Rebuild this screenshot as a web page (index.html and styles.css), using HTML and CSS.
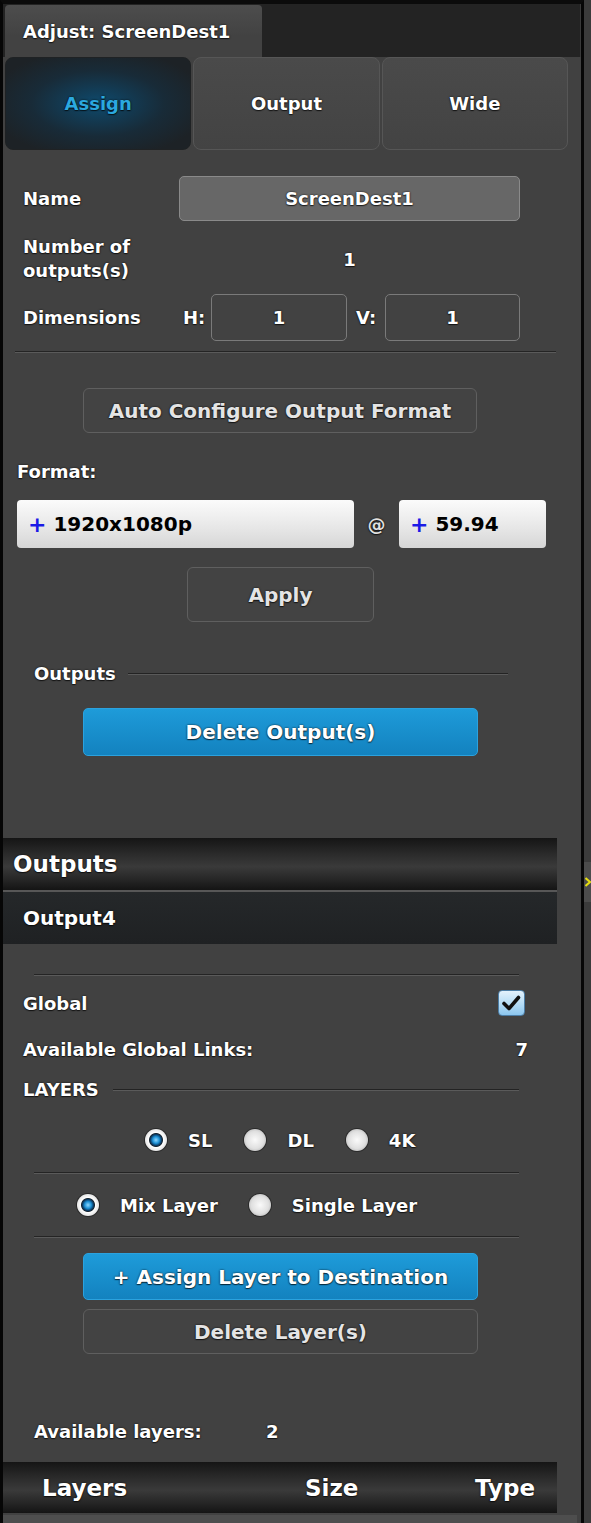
FILE: index.html
```html
<!DOCTYPE html>
<html lang="en">
<head>
<meta charset="utf-8">
<title>Adjust: ScreenDest1</title>
<link rel="stylesheet" href="styles.css">
</head>
<body>
<div class="panel">
  <div class="head">
    <div class="head-tab">Adjust: ScreenDest1</div>
  </div>

  <div class="tabs">
    <div class="tab active">Assign</div>
    <div class="tab">Output</div>
    <div class="tab">Wide</div>
  </div>

  <div class="content">
    <div class="form-row name-row">
      <span class="label">Name</span>
      <div class="name-field">ScreenDest1</div>
    </div>

    <div class="form-row count-row">
      <span class="label">Number of<br>outputs(s)</span>
      <span class="value">1</span>
    </div>

    <div class="form-row dims-row">
      <span class="label">Dimensions</span>
      <span class="axis">H:</span>
      <div class="dim-field">1</div>
      <span class="axis axis-v">V:</span>
      <div class="dim-field dim-v">1</div>
    </div>

    <div class="rule rule-wide"></div>

    <div class="btn btn-outline btn-auto">Auto Configure Output Format</div>

    <div class="format-label">Format:</div>

    <div class="format-row">
      <div class="select select-res"><span class="plus">+</span>1920x1080p</div>
      <span class="at">@</span>
      <div class="select select-rate"><span class="plus">+</span>59.94</div>
    </div>

    <div class="btn btn-outline btn-apply">Apply</div>

    <div class="section-title outputs-title">
      <span>Outputs</span>
      <div class="section-line"></div>
    </div>

    <div class="btn btn-blue btn-delete-out">Delete Output(s)</div>

    <div class="bar bar-outputs">Outputs</div>
    <div class="bar-sep"></div>
    <div class="bar-sub">Output4</div>

    <div class="rule rule-narrow rule-top"></div>

    <div class="line-row global-row">
      <span>Global</span>
      <span class="check">
        <svg viewBox="0 0 26 26" width="26" height="26"><path d="M6 13.5 L11 18.5 L20.5 7.5" fill="none" stroke="#111" stroke-width="3.6" stroke-linecap="round" stroke-linejoin="round"/></svg>
      </span>
    </div>

    <div class="line-row links-row">
      <span>Available Global Links:</span>
      <span>7</span>
    </div>

    <div class="section-title layers-title">
      <span>LAYERS</span>
      <div class="section-line"></div>
    </div>

    <div class="radio-row res-row">
      <span class="option"><span class="radio on"></span>SL</span>
      <span class="option"><span class="radio"></span>DL</span>
      <span class="option"><span class="radio"></span>4K</span>
    </div>

    <div class="rule rule-narrow rule-mid"></div>

    <div class="radio-row mix-row">
      <span class="option"><span class="radio on"></span>Mix Layer</span>
      <span class="option"><span class="radio"></span>Single Layer</span>
    </div>

    <div class="rule rule-narrow rule-low"></div>

    <div class="btn btn-blue btn-assign">+ Assign Layer to Destination</div>
    <div class="btn btn-outline btn-delete-layer">Delete Layer(s)</div>

    <div class="avail-row">
      <span class="avail-label">Available layers:</span>
      <span>2</span>
    </div>

    <div class="bar layers-bar">
      <span>Layers</span>
      <span>Size</span>
      <span>Type</span>
    </div>
  </div>
  <div class="strip"></div>
</div>

<div class="side">
  <div class="side-tab">
    <svg viewBox="0 0 6 12" width="6" height="12"><path d="M0.5 2 L5 6 L0.5 10" fill="none" stroke="#e6de10" stroke-width="2"/></svg>
  </div>
</div>
</body>
</html>
```

FILE: styles.css
```css
* {
  box-sizing: border-box;
  margin: 0;
  padding: 0;
}

body {
  display: flex;
  height: 1523px;
  overflow: hidden;
  background: #3b3b3b;
  color: #fff;
  font-family: "DejaVu Sans", Verdana, sans-serif;
  font-weight: bold;
  font-size: 18px;
  text-shadow: 0 0 2px rgba(0, 0, 0, 0.9), 0 1px 1px rgba(0, 0, 0, 0.6);
}

/* ---------- panel frame ---------- */
.panel {
  width: 584px;
  flex: none;
  min-height: 1523px;
  background: #414141;
  border-left: 3px solid #060606;
  border-right: 3px solid #060606;
  border-top: 4px solid #0b0b0b;
}

.head {
  height: 53px;
  display: flex;
  align-items: flex-end;
  background: #232323;
  border-right: 1px solid #3a3a3a;
}

.head-tab {
  width: 257px;
  height: 52px;
  margin-left: 2px;
  padding-left: 18px;
  display: flex;
  align-items: center;
  background: linear-gradient(#4d4d4d, #424242 60%);
  border-radius: 4px 4px 0 0;
}

/* ---------- mode tabs ---------- */
.tabs {
  height: 93px;
  display: flex;
  gap: 2px;
  padding: 0 13px 0 2px;
}

.tab {
  flex: 1;
  display: flex;
  align-items: center;
  justify-content: center;
  border-radius: 8px;
  background: linear-gradient(#4a4a4a, #434343);
  border: 1px solid #565656;
}

.tab.active {
  color: #2ba8df;
  border-color: #1f2224;
  background: radial-gradient(ellipse 60% 60% at 50% 50%, #0e4a6d 0%, #133a52 30%, #182b38 60%, #1d2226 100%);
}

/* ---------- content column ---------- */
.content {
  width: 554px;
}

.form-row {
  display: flex;
  align-items: center;
  padding-left: 20px;
}

.label {
  width: 156px;
  flex: none;
  line-height: 24px;
}

.name-row {
  margin-top: 26px;
  height: 45px;
}

.name-field {
  width: 341px;
  height: 45px;
  display: flex;
  align-items: center;
  justify-content: center;
  background: #676767;
  border: 1px solid #8a8a8a;
  border-radius: 5px;
}

.count-row {
  margin-top: 9px;
  height: 58px;
}

.count-row .value {
  width: 341px;
  text-align: center;
}

.dims-row {
  margin-top: 6px;
  height: 47px;
}

.axis {
  width: 32px;
  padding-left: 4px;
  flex: none;
}

.axis-v {
  width: 38px;
  padding-left: 9px;
}

.dim-field {
  width: 136px;
  height: 47px;
  display: flex;
  align-items: center;
  justify-content: center;
  background: #424242;
  border: 1px solid #7a7a7a;
  border-radius: 5px;
}

.dim-v {
  width: 135px;
}

/* two-tone separators */
.rule {
  height: 2px;
  border-top: 1px solid #242424;
  border-bottom: 1px solid #5a5a5a;
}

.rule-wide {
  margin: 10px 1px 0 12px;
}

.rule-narrow {
  margin-left: 31px;
  margin-right: 38px;
}

.rule-top { margin-top: 30px; }
.rule-mid { margin-top: 20px; }
.rule-low { margin-top: 19px; }

/* ---------- buttons ---------- */
.btn {
  display: flex;
  align-items: center;
  justify-content: center;
  font-size: 20px;
  border-radius: 6px;
}

.btn-outline {
  color: #e4e4e4;
  background: #434343;
  border: 1px solid #5f5f5f;
}

.btn-blue {
  color: #fff;
  background: linear-gradient(#1e9bd9, #1382bf);
  border: 1px solid #2ba2de;
  border-radius: 5px;
}

.btn-auto {
  width: 394px;
  height: 45px;
  margin: 35px 0 0 80px;
}

.btn-apply {
  width: 187px;
  height: 55px;
  margin: 19px 0 0 184px;
}

.btn-delete-out {
  width: 395px;
  height: 48px;
  margin: 22px 0 0 80px;
}

.btn-assign {
  width: 395px;
  height: 47px;
  margin: 15px 0 0 80px;
}

.btn-delete-layer {
  width: 395px;
  height: 45px;
  margin: 9px 0 0 80px;
}

/* ---------- format selectors ---------- */
.format-label {
  margin-top: 27px;
  padding-left: 14px;
  line-height: 24px;
}

.format-row {
  display: flex;
  align-items: center;
  margin-top: 16px;
  padding-left: 14px;
  height: 48px;
}

.select {
  height: 48px;
  display: flex;
  align-items: center;
  padding-left: 11px;
  font-size: 20px;
  color: #000;
  text-shadow: none;
  background: linear-gradient(#fbfbfb, #e6e6e6 60%, #d6d6d6);
  border-radius: 4px;
}

.select-res { width: 337px; }
.select-rate { width: 147px; }

.plus {
  color: #1a1ae6;
  font-weight: bold;
  font-size: 22px;
  margin-right: 7px;
}

.at {
  width: 45px;
  text-align: center;
  font-size: 18px;
  color: #e0e0e0;
}

/* ---------- section titles with trailing line ---------- */
.section-title {
  display: flex;
  align-items: center;
  line-height: 24px;
}

.section-line {
  flex: 1;
  height: 2px;
  border-top: 1px solid #232323;
  border-bottom: 1px solid #5a5a5a;
}

.outputs-title {
  margin-top: 40px;
  padding-left: 31px;
  gap: 12px;
  margin-right: 49px;
}

.layers-title {
  margin-top: 17px;
  padding-left: 20px;
  gap: 14px;
  margin-right: 38px;
}

/* ---------- header bars ---------- */
.bar {
  height: 52px;
  display: flex;
  align-items: center;
  font-size: 23px;
  background: linear-gradient(#151515 0%, #2a2a2a 30%, #3a3a3a 55%, #262626 80%, #141414 100%);
}

.bar-outputs {
  margin-top: 82px;
  padding-left: 10px;
}

.bar-sep {
  height: 2px;
  background: #575757;
}

.bar-sub {
  height: 52px;
  display: flex;
  align-items: center;
  padding-left: 20px;
  font-size: 20px;
  background: linear-gradient(#25282a, #1f2123);
}

/* ---------- option rows ---------- */
.line-row {
  display: flex;
  align-items: center;
  justify-content: space-between;
  height: 24px;
  padding-left: 20px;
}

.global-row {
  margin-top: 15px;
  padding-right: 32px;
}

.links-row {
  margin-top: 22px;
  padding-right: 29px;
}

.check {
  width: 27px;
  height: 26px;
  display: flex;
  border-radius: 4px;
  background: linear-gradient(#e4f2fc, #b4dcf6 55%, #8cc6ee);
  border: 1px solid #4d7ea6;
}

.check svg {
  margin: -1px 0 0 -1px;
}

.radio-row {
  display: flex;
  align-items: center;
  height: 24px;
  gap: 32px;
}

.res-row {
  margin-top: 26px;
  padding-left: 142px;
}

.mix-row {
  margin-top: 19px;
  padding-left: 74px;
  gap: 31px;
}

.option {
  display: flex;
  align-items: center;
  gap: 21px;
}

.radio {
  width: 22px;
  height: 22px;
  flex: none;
  border-radius: 50%;
  background: radial-gradient(circle, #fafafa 0%, #e0e0e0 55%, #b4b4b4 85%, #8e8e8e 100%);
  box-shadow: 0 0 0 1px #2a2a2a;
}

.radio.on {
  background: radial-gradient(circle, #8fd8ff 0%, #1b8fd4 22%, #0b3a63 36%, #1c2a36 42%, #ffffff 48%, #e2e2e2 72%, #9a9a9a 100%);
}

.avail-row {
  display: flex;
  align-items: center;
  height: 24px;
  margin-top: 65px;
  padding-left: 31px;
}

.avail-label {
  width: 232px;
}

.layers-bar {
  margin-top: 19px;
  height: 51px;
  display: grid;
  grid-template-columns: 263px 170px auto;
  padding-left: 39px;
}

.strip {
  width: 574px;
  height: 10px;
  margin-top: 2px;
  background: #4e4e4e;
}

/* ---------- right edge ---------- */
.side {
  flex: 1;
  padding-top: 862px;
}

.side-tab {
  height: 40px;
  display: flex;
  align-items: center;
  padding-left: 1px;
  background: #4c4c4c;
}
```
